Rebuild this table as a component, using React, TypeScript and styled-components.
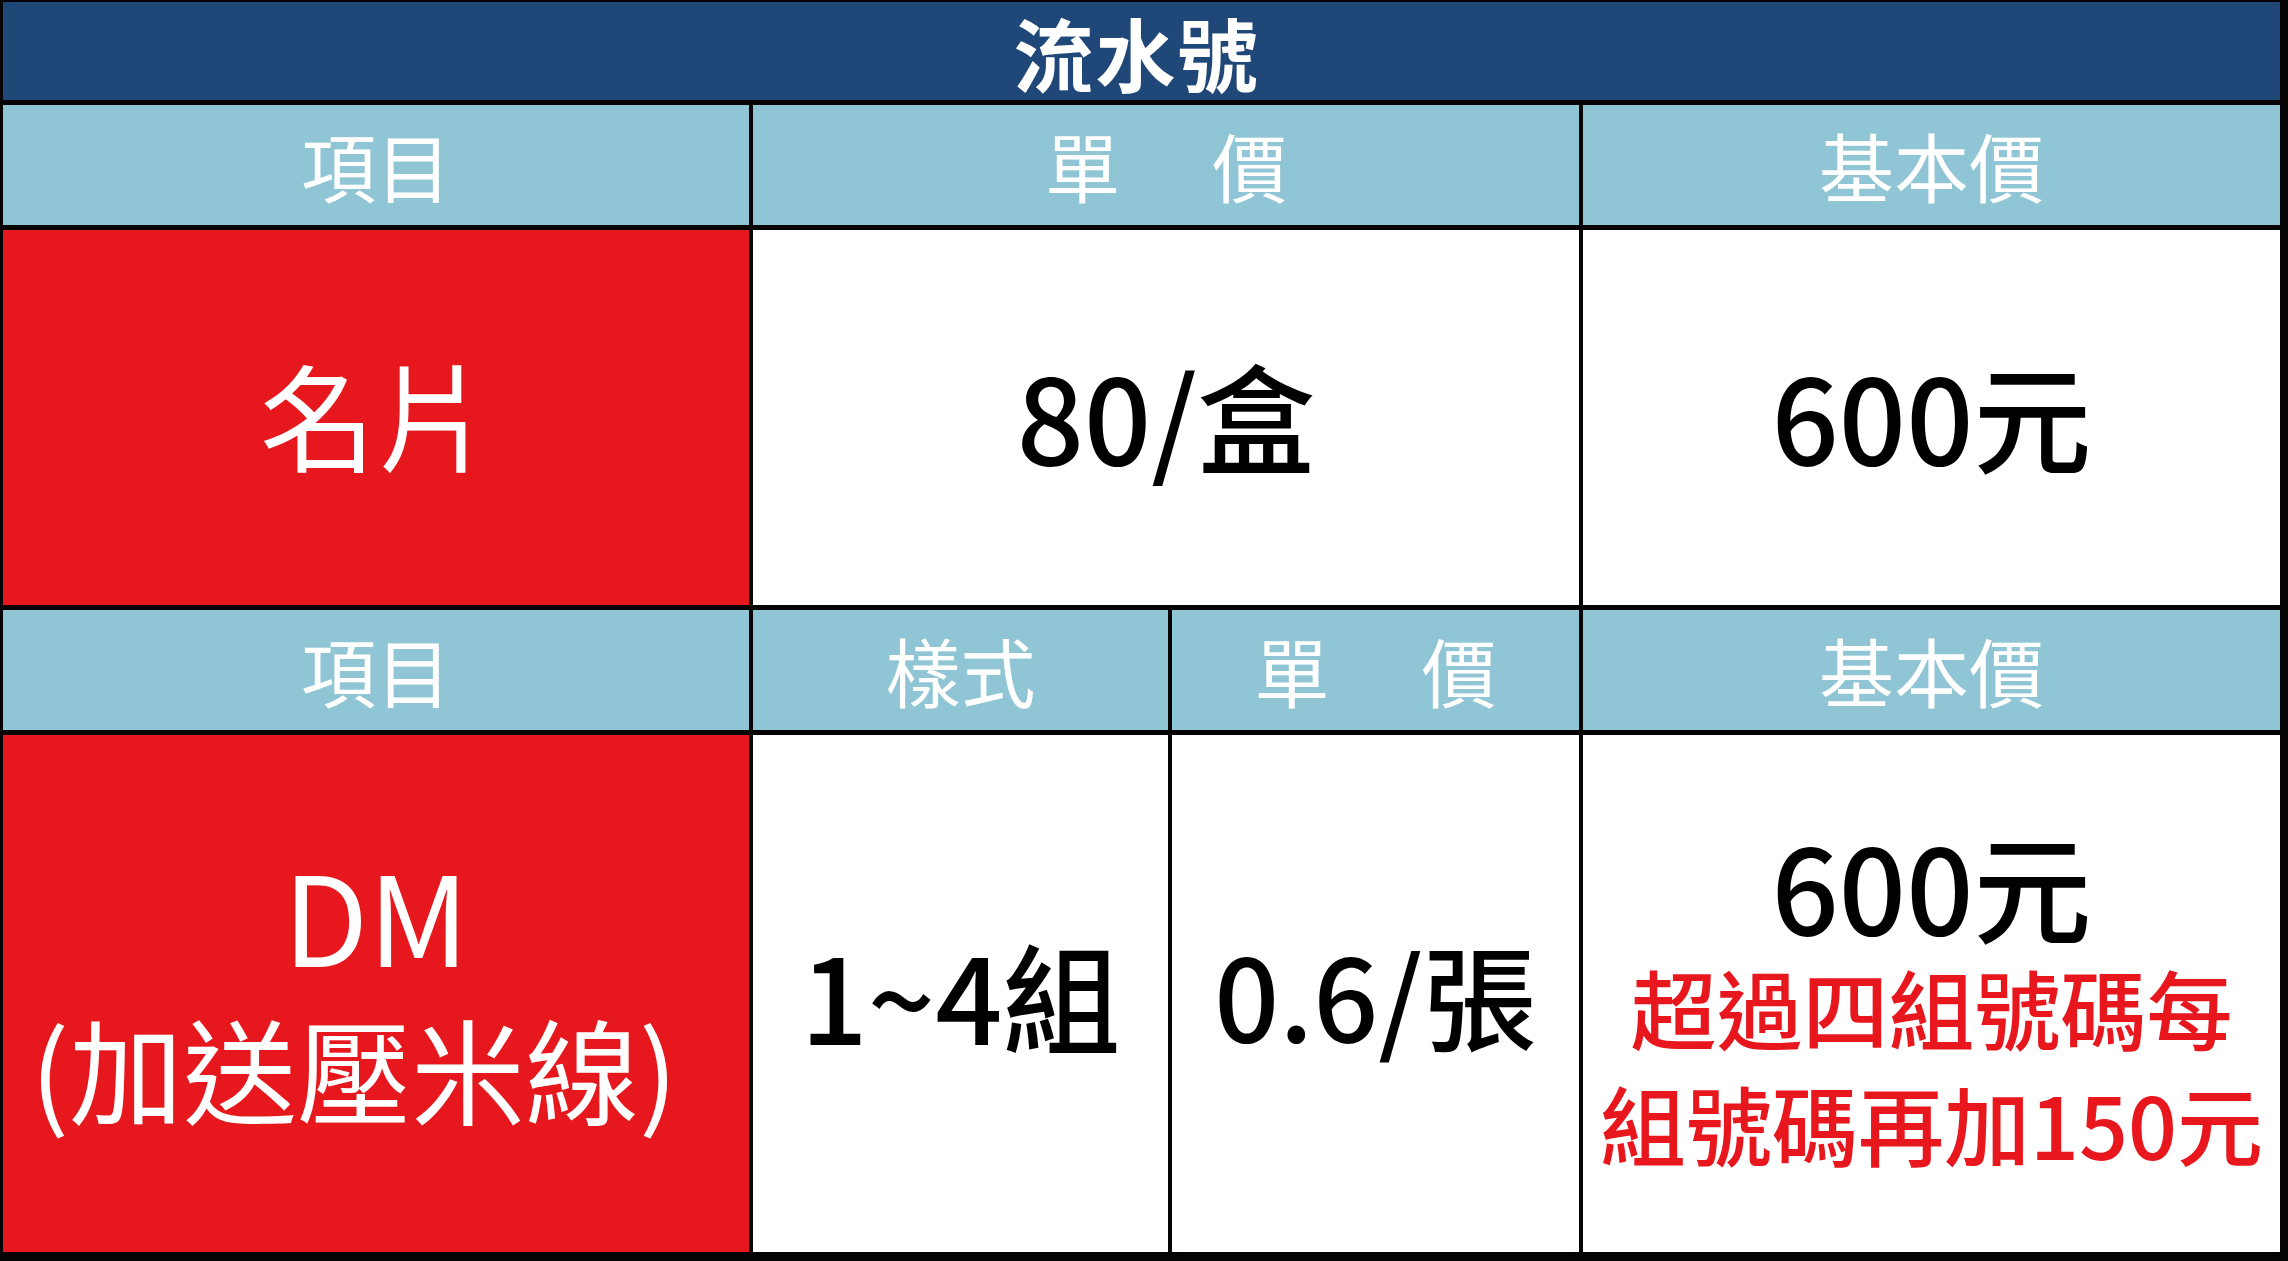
import React from 'react';
import styled, { createGlobalStyle } from 'styled-components';

const GlobalStyle = createGlobalStyle`
  html, body {
    margin: 0;
    padding: 0;
    background: #ffffff;
  }
  body {
    font-family: "Noto Sans CJK TC", "Noto Sans", sans-serif;
  }
`;

type Tone = 'title' | 'head' | 'label' | 'body';

const toneBg: Record<Tone, string> = {
  title: '#1f4778',
  head: '#8fc5d4',
  label: '#e6171d',
  body: '#ffffff',
};

const toneColor: Record<Tone, string> = {
  title: '#ffffff',
  head: '#ffffff',
  label: '#ffffff',
  body: '#000000',
};

const Board = styled.div`
  width: 2288px;
  height: 1261px;
  box-sizing: border-box;
  padding: 2px 8px 9px 3px;
  background: #050303;
  display: grid;
  grid-template-columns: 746px 415px 407px 697px;
  grid-template-rows: 98px 120px 375px 120px 517px;
  column-gap: 4px;
  row-gap: 5px;
`;

const Cell = styled.div<{ $tone: Tone; $span?: number; $raise?: number }>`
  grid-column: span ${({ $span }) => $span || 1};
  background: ${({ $tone }) => toneBg[$tone]};
  color: ${({ $tone }) => toneColor[$tone]};
  display: flex;
  flex-direction: column;
  align-items: center;
  justify-content: center;
  text-align: center;
  white-space: nowrap;
  padding-bottom: ${({ $raise }) => $raise || 0}px;
`;

const Title = styled.span`
  font-size: 80px;
  font-weight: 700;
  line-height: 96px;
  letter-spacing: 2px;
  margin-left: -10px;
`;

const HeadText = styled.span`
  font-size: 75px;
  font-weight: 400;
  line-height: 1.2;
`;

const Spread = styled.span`
  display: inline-flex;
  gap: 92px;
  font-size: 75px;
  line-height: 1.2;
`;

const BigText = styled.span<{ $size?: number; $line?: number; $weight?: number }>`
  font-size: ${({ $size }) => $size || 118}px;
  line-height: ${({ $line }) => ($line ? `${$line}px` : 1.2)};
  font-weight: ${({ $weight }) => $weight || 500};
`;

const LabelText = styled.span<{ $size?: number; $shift?: number }>`
  display: block;
  font-size: ${({ $size }) => $size || 114}px;
  line-height: 154px;
  font-weight: 400;
  margin-left: ${({ $shift }) => $shift || 0}px;
`;

const Note = styled.span`
  display: block;
  color: #e8161d;
  font-size: 86px;
  line-height: 116px;
  font-weight: 500;
`;

const Stack = styled.div`
  display: flex;
  flex-direction: column;
  align-items: center;
  margin-top: 12px;
`;

const PriceHead = () => (
  <Spread>
    <span>單</span>
    <span>價</span>
  </Spread>
);

export default function App() {
  return (
    <>
      <GlobalStyle />
      <Board>
        <Cell $tone="title" $span={4}>
          <Title>流水號</Title>
        </Cell>

        <Cell $tone="head">
          <HeadText>項目</HeadText>
        </Cell>
        <Cell $tone="head" $span={2}>
          <PriceHead />
        </Cell>
        <Cell $tone="head">
          <HeadText>基本價</HeadText>
        </Cell>

        <Cell $tone="label" $raise={10}>
          <BigText $size={116} $weight={400}>名片</BigText>
        </Cell>
        <Cell $tone="body" $span={2} $raise={8}>
          <BigText>80/盒</BigText>
        </Cell>
        <Cell $tone="body" $raise={8}>
          <BigText>600元</BigText>
        </Cell>

        <Cell $tone="head">
          <HeadText>項目</HeadText>
        </Cell>
        <Cell $tone="head">
          <HeadText>樣式</HeadText>
        </Cell>
        <Cell $tone="head">
          <PriceHead />
        </Cell>
        <Cell $tone="head">
          <HeadText>基本價</HeadText>
        </Cell>

        <Cell $tone="label" $raise={8}>
          <LabelText $size={124}>DM</LabelText>
          <LabelText $shift={-44}>(加送壓米線)</LabelText>
        </Cell>
        <Cell $tone="body">
          <BigText>1~4組</BigText>
        </Cell>
        <Cell $tone="body">
          <BigText $size={114}>0.6/張</BigText>
        </Cell>
        <Cell $tone="body">
          <Stack>
            <BigText $line={130}>600元</BigText>
            <Note>超過四組號碼每</Note>
            <Note>組號碼再加150元</Note>
          </Stack>
        </Cell>
      </Board>
    </>
  );
}
